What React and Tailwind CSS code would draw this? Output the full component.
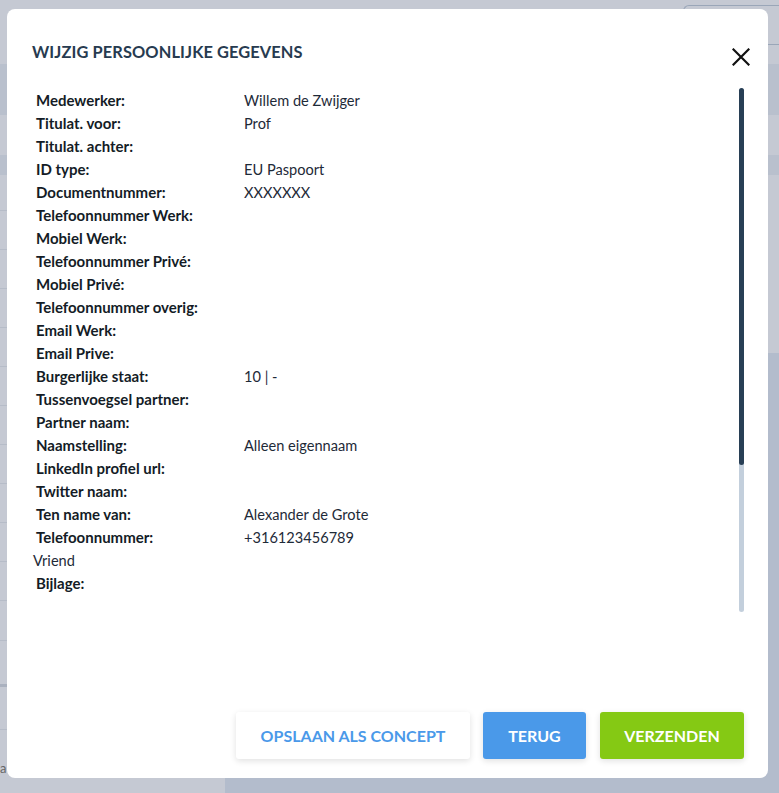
import React from 'react';

const rows = [
  { label: 'Medewerker:', value: 'Willem de Zwijger' },
  { label: 'Titulat. voor:', value: 'Prof' },
  { label: 'Titulat. achter:', value: '' },
  { label: 'ID type:', value: 'EU Paspoort' },
  { label: 'Documentnummer:', value: 'XXXXXXX' },
  { label: 'Telefoonnummer Werk:', value: '' },
  { label: 'Mobiel Werk:', value: '' },
  { label: 'Telefoonnummer Privé:', value: '' },
  { label: 'Mobiel Privé:', value: '' },
  { label: 'Telefoonnummer overig:', value: '' },
  { label: 'Email Werk:', value: '' },
  { label: 'Email Prive:', value: '' },
  { label: 'Burgerlijke staat:', value: '10 | -' },
  { label: 'Tussenvoegsel partner:', value: '' },
  { label: 'Partner naam:', value: '' },
  { label: 'Naamstelling:', value: 'Alleen eigennaam' },
  { label: 'LinkedIn profiel url:', value: '' },
  { label: 'Twitter naam:', value: '' },
  { label: 'Ten name van:', value: 'Alexander de Grote' },
  { label: 'Telefoonnummer:', value: '+316123456789' },
];

const App = () => {
  return (
    <div className="relative w-[779px] h-[793px] overflow-hidden bg-[#c5c9d3]" style={{ fontFamily: 'Lato, "Open Sans", sans-serif' }}>
      {/* page behind the overlay */}
      <div className="flex flex-col h-full">
        <div className="h-[64px] flex justify-end pt-[5px]">
          <div className="w-[96px] h-[40px] border border-[#9aa6b8] rounded-l-[6px] border-r-0" />
        </div>
        <div className="h-[51px] bg-[#b9c0cd]" />
        <div className="h-[40px]" />
        <div className="h-[20px] bg-[#b9c0cd]" />
        <div className="flex-1 flex">
          <div className="w-[225px] flex flex-col">
            <div className="h-[36px] border-b border-[#b6bcc8]" />
            <div className="h-[39px] border-b border-[#b6bcc8]" />
            <div className="h-[39px] border-b border-[#b6bcc8]" />
            <div className="h-[39px] border-b border-[#b6bcc8]" />
            <div className="h-[39px] border-b border-[#b6bcc8]" />
            <div className="h-[39px] border-b border-[#b6bcc8]" />
            <div className="h-[39px] border-b border-[#b6bcc8]" />
            <div className="h-[39px] border-b border-[#b6bcc8]" />
            <div className="h-[39px] border-b border-[#b6bcc8]" />
            <div className="h-[39px] border-b border-[#b6bcc8]" />
            <div className="h-[39px] border-b border-[#b6bcc8]" />
            <div className="h-[40px] border-b border-[#b6bcc8]" />
            <div className="h-[46px] border-b-[3px] border-[#aab1bf]" />
            <div className="h-[43px] border-b border-[#b6bcc8]" />
            <div className="h-[48px] text-[13px] text-[#666] pt-[30px] leading-[16px]">a</div>
          </div>
          <div className="flex-1 flex flex-col">
            <div className="h-[178px]" />
            <div className="flex-1 bg-[#b3bccc]" />
          </div>
        </div>
      </div>

      {/* modal */}
      <div className="absolute left-[7px] top-[9px] w-[761px] h-[769px] bg-white rounded-[8px] flex flex-col">
        <div className="flex items-start justify-between pt-[33px] pl-[25px] pr-[17px] h-[79px]">
          <h2 className="text-[16.4px] font-bold tracking-[0.1px] text-[#273b50] leading-[20px]">WIJZIG PERSOONLIJKE GEGEVENS</h2>
          <button className="mt-[5px] w-[20px] h-[20px] flex items-center justify-center">
            <svg width="18" height="18" viewBox="0 0 18 18" fill="none">
              <path d="M1.5 1.5L16.5 16.5M16.5 1.5L1.5 16.5" stroke="#111" strokeWidth="2.2" strokeLinecap="square" />
            </svg>
          </button>
        </div>

        <div className="flex h-[524px] pr-[24px]">
          <div className="flex-1 pl-[26px] pt-[1px] leading-[23px]">
            {rows.map((r) => (
              <div key={r.label} className="flex items-baseline">
                <div className="w-[211px] pl-[3px] text-[15px] font-bold text-[#141c26]">{r.label}</div>
                <div className="text-[14.6px] text-[#1e2a38]">{r.value}</div>
              </div>
            ))}
            <div className="text-[14.6px] text-[#1e2a38]">Vriend</div>
            <div className="flex">
              <div className="w-[211px] pl-[3px] text-[15px] font-bold text-[#141c26]">Bijlage:</div>
            </div>
          </div>
          <div className="w-[5px] h-full rounded-full bg-[#c3cfdc] flex flex-col">
            <div className="h-[377px] rounded-full bg-[#283f55]" />
          </div>
        </div>

        <div className="flex-1" />

        <div className="flex justify-end gap-[13px] pr-[24px] pb-[19px]">
          <button className="h-[47px] w-[234px] bg-white rounded-[3px] shadow-[0_2px_6px_rgba(0,0,0,0.12)] text-[16px] font-bold text-[#4a99e9]">
            OPSLAAN ALS CONCEPT
          </button>
          <button className="h-[47px] w-[103px] bg-[#4a99e9] rounded-[3px] shadow-[0_2px_6px_rgba(0,0,0,0.12)] text-[16px] font-bold text-white">
            TERUG
          </button>
          <button className="h-[47px] w-[144px] ml-[1px] bg-[#85c914] rounded-[3px] shadow-[0_2px_6px_rgba(0,0,0,0.12)] text-[16px] font-bold text-white">
            VERZENDEN
          </button>
        </div>
      </div>
    </div>
  );
};

export default App;
